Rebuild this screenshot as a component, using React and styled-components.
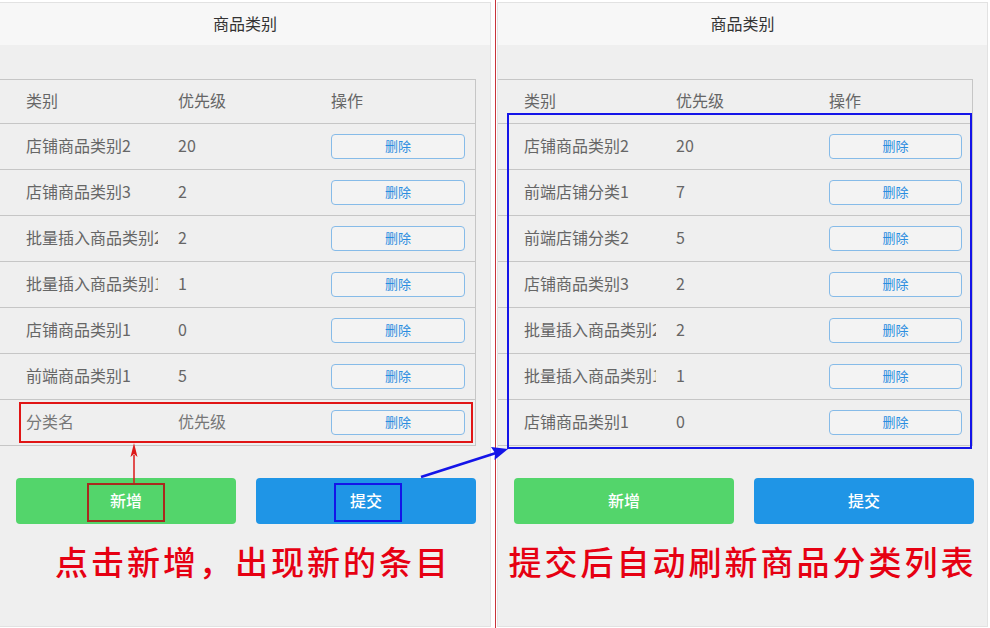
import React from 'react';
import styled, { createGlobalStyle } from 'styled-components';

const Global = createGlobalStyle`
  html, body { margin: 0; padding: 0; background: #fff; }
  body { font-family: "Noto Sans CJK SC", "Noto Sans", sans-serif; }
  * { box-sizing: border-box; }
`;

const Page = styled.div`
  position: relative;
  width: 990px;
  height: 628px;
  display: flex;
  align-items: flex-start;
  overflow: hidden;
  background: #fff;
`;

const Panel = styled.section`
  width: 491px;
  height: 625px;
  margin-top: 2px;
  flex: none;
  border: 1px solid #e2e2e2;
  border-left: ${(p) => (p.$bare ? 'none' : '1px solid #e2e2e2')};
  background: #efefef;
  display: flex;
  flex-direction: column;
`;

const Divider = styled.div`
  width: 1px;
  height: 628px;
  flex: none;
  margin: 0 1px 0 4px;
  background: #c8343a;
`;

const Header = styled.header`
  height: 42px;
  flex: none;
  background: #f7f7f7;
  display: flex;
  align-items: center;
  justify-content: center;
  padding-bottom: 3px;
  font-size: 16px;
  color: #333;
`;

const Body = styled.div`
  flex: 1;
  padding-top: 34px;
  display: flex;
  flex-direction: column;
`;

const Table = styled.div`
  margin-right: 14px;
  border-top: 1px solid #c6c6c6;
  border-right: 1px solid #c6c6c6;
`;

const Row = styled.div`
  display: grid;
  grid-template-columns: 152px 153px 1fr;
  align-items: center;
  height: ${(p) => (p.$head ? '44px' : '46px')};
  padding: 0 10px 0 26px;
  border-bottom: 1px solid #c6c6c6;
  font-size: 16px;
  color: ${(p) => (p.$placeholder ? '#777' : '#666')};
`;

const Cell = styled.div`
  white-space: nowrap;
  line-height: 24px;
  padding-bottom: 3px;
  min-width: 0;
`;

const ClipCell = styled(Cell)`
  overflow: hidden;
  margin-right: 20px;
`;

const DeleteButton = styled.button`
  height: 25px;
  width: 100%;
  border: 1px solid #86bbe8;
  border-radius: 4px;
  background: #f3f3f3;
  color: #2a8de0;
  font-family: inherit;
  font-size: 13px;
  padding: 0 0 2px;
  display: flex;
  align-items: center;
  justify-content: center;
`;

const Actions = styled.div`
  display: flex;
  gap: 20px;
  padding-left: 16px;
  margin-top: 32px;
`;

const ActionButton = styled.button`
  width: 220px;
  height: 46px;
  border: none;
  border-radius: 4px;
  background: ${(p) => (p.$tone === 'green' ? '#53d56b' : '#1f95e6')};
  color: #fff;
  font-family: inherit;
  font-size: 16px;
  font-weight: 500;
  padding: 0 0 2px;
  display: flex;
  align-items: center;
  justify-content: center;
`;

const Note = styled.div`
  margin-top: 17px;
  height: 40px;
  line-height: 40px;
  font-size: 33px;
  letter-spacing: 3px;
  color: #e60012;
  font-weight: 500;
  text-align: center;
  white-space: nowrap;
  padding-left: ${(p) => p.$shift || 0}px;
`;

const Overlay = styled.svg`
  position: absolute;
  left: 0;
  top: 0;
  pointer-events: none;
`;

const leftRows = [
  ['店铺商品类别2', '20'],
  ['店铺商品类别3', '2'],
  ['批量插入商品类别2', '2'],
  ['批量插入商品类别1', '1'],
  ['店铺商品类别1', '0'],
  ['前端商品类别1', '5'],
];

const rightRows = [
  ['店铺商品类别2', '20'],
  ['前端店铺分类1', '7'],
  ['前端店铺分类2', '5'],
  ['店铺商品类别3', '2'],
  ['批量插入商品类别2', '2'],
  ['批量插入商品类别1', '1'],
  ['店铺商品类别1', '0'],
];

function CategoryPanel({ rows, draft, bare, note, noteShift }) {
  return (
    <Panel $bare={bare}>
      <Header>商品类别</Header>
      <Body>
        <Table>
          <Row $head>
            <ClipCell>类别</ClipCell>
            <Cell>优先级</Cell>
            <Cell>操作</Cell>
          </Row>
          {rows.map(([name, pri], i) => (
            <Row key={i}>
              <ClipCell>{name}</ClipCell>
              <Cell>{pri}</Cell>
              <DeleteButton>删除</DeleteButton>
            </Row>
          ))}
          {draft && (
            <Row $placeholder>
              <ClipCell>分类名</ClipCell>
              <Cell>优先级</Cell>
              <DeleteButton>删除</DeleteButton>
            </Row>
          )}
        </Table>
        <Actions>
          <ActionButton $tone="green">新增</ActionButton>
          <ActionButton $tone="blue">提交</ActionButton>
        </Actions>
        <Note $shift={noteShift}>{note}</Note>
      </Body>
    </Panel>
  );
}

function Annotations() {
  return (
    <Overlay width="990" height="628" viewBox="0 0 990 628">
      <rect x="20" y="403" width="452" height="39" fill="none" stroke="#e01515" strokeWidth="2" />
      <rect x="88" y="484" width="76" height="37" fill="none" stroke="#a82a1e" strokeWidth="2" />
      <line x1="134" y1="455" x2="134" y2="483" stroke="#dd1818" strokeWidth="1.5" />
      <polygon points="134,443 130.5,457 134,454 137.5,457" fill="#dd1818" />
      <rect x="335" y="484" width="66" height="37" fill="none" stroke="#1414e8" strokeWidth="2" />
      <line x1="421" y1="477" x2="496" y2="453" stroke="#1414e8" strokeWidth="2.5" />
      <polygon points="508,449 491,447 495,453 494.5,460" fill="#1414e8" />
      <rect x="508" y="114" width="463" height="334" fill="none" stroke="#1414e8" strokeWidth="2" />
    </Overlay>
  );
}

export default function App() {
  return (
    <>
      <Global />
      <Page>
        <CategoryPanel
          rows={leftRows}
          draft
          bare
          note="点击新增，出现新的条目"
          noteShift={16}
        />
        <Divider />
        <CategoryPanel rows={rightRows} note="提交后自动刷新商品分类列表" />
        <Annotations />
      </Page>
    </>
  );
}
